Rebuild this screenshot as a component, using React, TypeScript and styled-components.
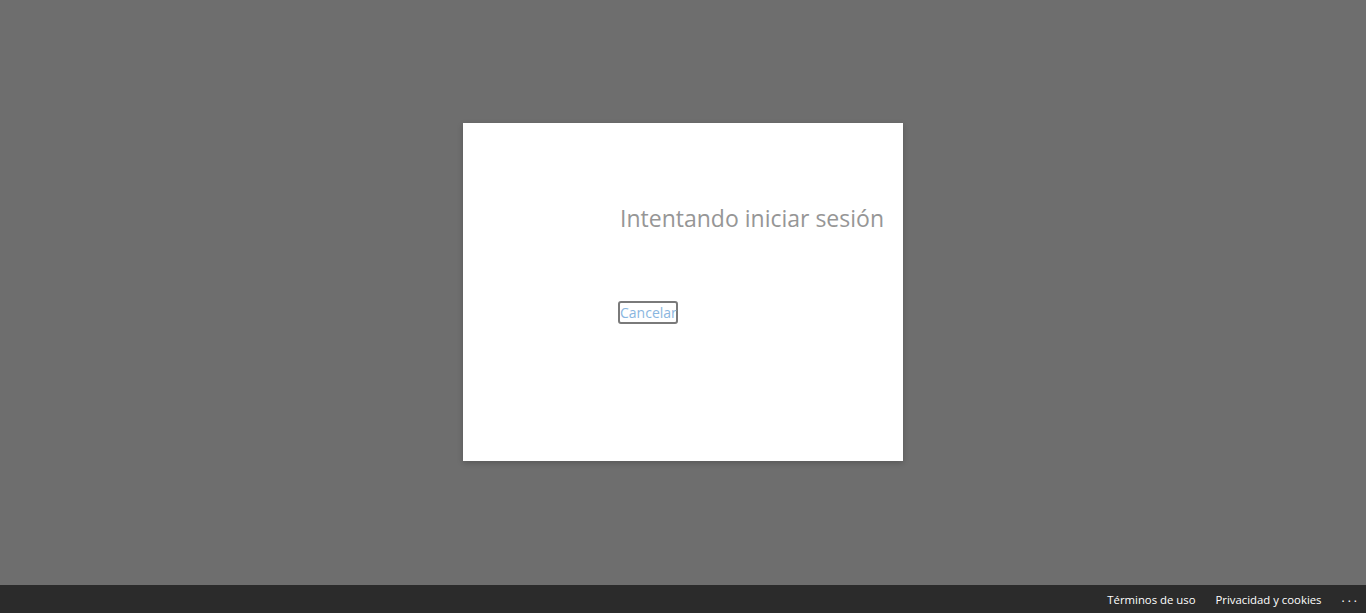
import React from "react";
import styled, { createGlobalStyle } from "styled-components";

const Global = createGlobalStyle`
  html, body { margin: 0; padding: 0; height: 100%; }
  body { background: #6e6e6e; font-family: "Segoe UI", "Open Sans", "Noto Sans", sans-serif; }
  #root { height: 100%; }
`;

const Page = styled.div`
  height: 613px;
  display: flex;
  flex-direction: column;
  background: #6e6e6e;
`;

const Stage = styled.main`
  flex: 1;
  display: flex;
  justify-content: center;
  padding-top: 123px;
  box-sizing: border-box;
`;

const Dialog = styled.section`
  width: 440px;
  height: 338px;
  background: #ffffff;
  box-shadow: 0 2px 6px rgba(0, 0, 0, 0.2);
  box-sizing: border-box;
  padding: 79px 0 0 155px;
  display: flex;
  flex-direction: column;
  align-items: flex-start;
`;

const Title = styled.h1`
  margin: 0 0 0 2px;
  font-family: "Open Sans", sans-serif;
  font-weight: 500;
  font-size: 23px;
  line-height: 32px;
  color: #969696;
  white-space: nowrap;
`;

const CancelButton = styled.button`
  margin-top: 67px;
  padding: 0;
  height: 23px;
  width: 60px;
  background: #fff;
  border: 2px solid #7a7a7a;
  border-radius: 3px;
  color: #8ab6e0;
  font-family: "Open Sans", sans-serif;
  font-size: 14px;
  line-height: 19px;
  cursor: pointer;
`;

const Footer = styled.footer`
  height: 28px;
  background: #2b2b2b;
  display: flex;
  align-items: center;
  justify-content: flex-end;
  padding-right: 6px;
  gap: 20px;
`;

const FooterLink = styled.a`
  color: #ffffff;
  font-family: "Open Sans", sans-serif;
  font-size: 11.35px;
  text-decoration: none;
  white-space: nowrap;
`;

const More = styled.span`
  color: #ffffff;
  font-family: "Open Sans", sans-serif;
  font-size: 12px;
  letter-spacing: 3px;
  padding-bottom: 4px;
`;

export default function App() {
  return (
    <Page>
      <Global />
      <Stage>
        <Dialog>
          <Title>Intentando iniciar sesión</Title>
          <CancelButton>Cancelar</CancelButton>
        </Dialog>
      </Stage>
      <Footer>
        <FooterLink href="#">Términos de uso</FooterLink>
        <FooterLink href="#">Privacidad y cookies</FooterLink>
        <More>...</More>
      </Footer>
    </Page>
  );
}
